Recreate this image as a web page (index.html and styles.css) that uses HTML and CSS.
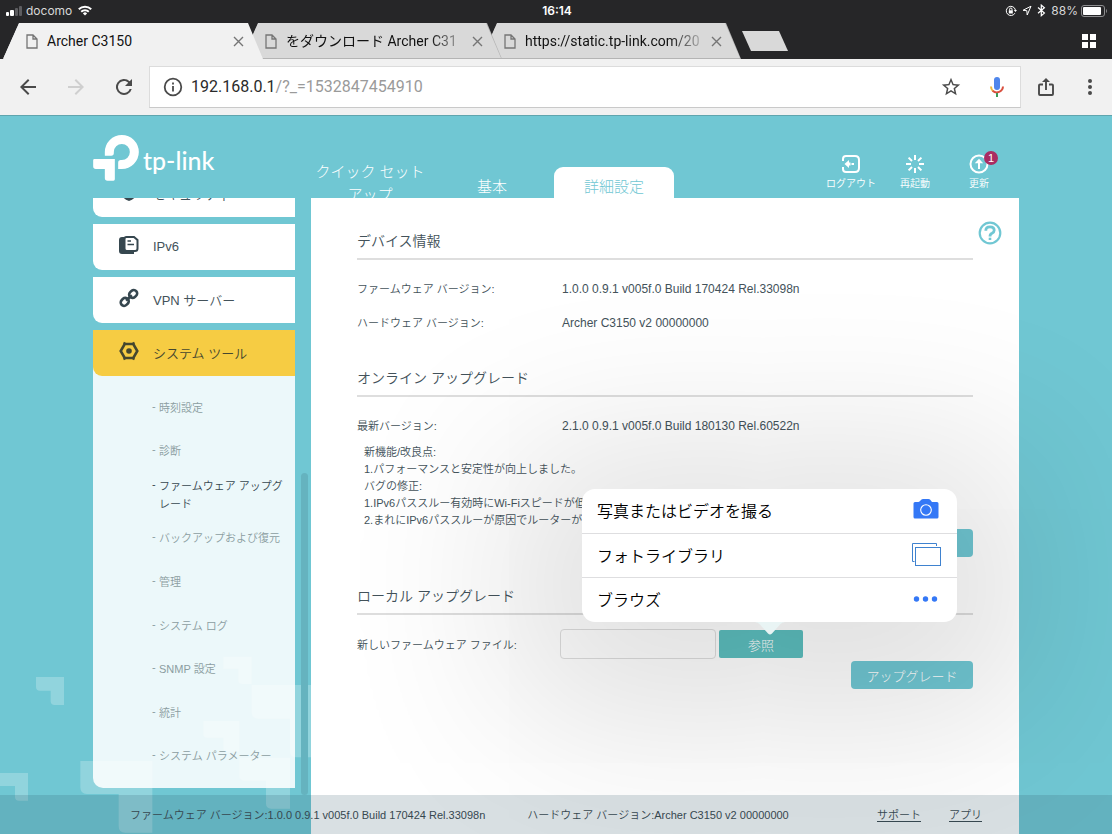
FILE: index.html
```html
<!DOCTYPE html>
<html lang="ja">
<head>
<meta charset="utf-8">
<meta name="viewport" content="width=device-width, initial-scale=1">
<title>Archer C3150</title>
<link rel="stylesheet" href="styles.css">
</head>
<body>
<div class="status">
  <div class="status-side">
    <svg width="18" height="12" viewBox="0 0 18 12" fill="#fff"><rect x="0" y="7" width="3" height="4" rx="1"/><rect x="4" y="5" width="4" height="6" rx="1"/><rect x="9" y="3" width="3" height="8" rx="1" fill="#5d5d60"/><rect x="13" y="1" width="3" height="10" rx="1" fill="#5d5d60"/></svg>
    <span>docomo</span>
    <svg class="wifi" width="14" height="11" viewBox="0 0 14 11" fill="none" stroke="#fff" stroke-width="2"><path d="M.8 4.2a8.8 8.8 0 0 1 12.4 0M3.2 6.7a5.4 5.4 0 0 1 7.6 0"/><path d="M7 10.6 4.9 8.4a3 3 0 0 1 4.2 0Z" fill="#fff" stroke="none"/></svg>
  </div>
  <div class="clock">16:14</div>
  <div class="status-side status-right">
    <svg width="12" height="12" viewBox="0 0 12 12" fill="none" stroke="#fff"><path d="M9.9 8.2A4.6 4.6 0 1 1 10.4 5"/><path d="M8.8 4.9h3.2L10.4 7Z" fill="#fff" stroke="none"/><rect x="3.8" y="5.3" width="4" height="3.2" fill="#fff" stroke="none"/><path d="M4.6 5.5V4.2a1.2 1.2 0 0 1 2.4 0v1.3"/></svg>
    <svg width="10" height="11" viewBox="0 0 10 11" fill="none" stroke="#fff"><path d="M9 1.2 1 5.3l3.8.4L5.2 10Z"/></svg>
    <svg width="9" height="13" viewBox="0 0 9 13" fill="none" stroke="#fff" stroke-width="1.2"><path d="m1 3.5 6.4 5.6-3.1 2.6V1.1l3.1 2.6L1 9.3"/></svg>
    <span>88%</span>
    <svg class="battery" width="27" height="12" viewBox="0 0 27 12" fill="none"><rect x=".5" y=".5" width="23" height="11" rx="2.5" stroke="#8e8e90"/><rect x="2" y="2" width="18" height="8" rx="1" fill="#fff"/><path d="M25 4v4c1.3-.6 1.3-3.4 0-4Z" fill="#8e8e90"/></svg>
  </div>
</div>

<div class="tabstrip">
  <div class="tab tab-active">
    <svg class="doc" width="12" height="15" viewBox="0 0 12 15" fill="none" stroke="#757575" stroke-width="1.3"><path d="M1 1h6l4 4v9H1ZM7 1v4h4"/></svg>
    <span class="tab-title">Archer C3150</span>
    <button class="close" aria-label="閉じる"><svg width="11" height="11" viewBox="0 0 11 11" stroke="#757575" stroke-width="1.4"><path d="m1 1 9 9M10 1l-9 9"/></svg></button>
  </div>
  <div class="tab tab-second">
    <svg class="doc" width="12" height="15" viewBox="0 0 12 15" fill="none" stroke="#757575" stroke-width="1.3"><path d="M1 1h6l4 4v9H1ZM7 1v4h4"/></svg>
    <span class="tab-title fade">をダウンロード Archer C31</span>
    <button class="close" aria-label="閉じる"><svg width="11" height="11" viewBox="0 0 11 11" stroke="#757575" stroke-width="1.4"><path d="m1 1 9 9M10 1l-9 9"/></svg></button>
  </div>
  <div class="tab">
    <svg class="doc" width="12" height="15" viewBox="0 0 12 15" fill="none" stroke="#757575" stroke-width="1.3"><path d="M1 1h6l4 4v9H1ZM7 1v4h4"/></svg>
    <span class="tab-title fade">https://static.tp-link.com/20</span>
    <button class="close" aria-label="閉じる"><svg width="11" height="11" viewBox="0 0 11 11" stroke="#757575" stroke-width="1.4"><path d="m1 1 9 9M10 1l-9 9"/></svg></button>
  </div>
  <button class="newtab" aria-label="新しいタブ"></button>
  <button class="grid-btn" aria-label="タブ一覧"><svg width="14" height="14" viewBox="0 0 14 14" fill="#fff"><path d="M0 0h6v6H0zM8 0h6v6H8zM0 8h6v6H0zM8 8h6v6H8z"/></svg></button>
</div>

<div class="toolbar">
  <button aria-label="戻る"><svg width="24" height="24" viewBox="0 0 24 24" fill="#4a4a4a"><path d="M20 11H7.8l5.6-5.6L12 4l-8 8 8 8 1.4-1.4L7.8 13H20z"/></svg></button>
  <button aria-label="進む"><svg width="24" height="24" viewBox="0 0 24 24" fill="#cfcfcf"><path d="m12 4-1.4 1.4 5.6 5.6H4v2h12.200l-5.600 5.600L12 20l8-8z"/></svg></button>
  <button aria-label="再読み込み"><svg width="24" height="24" viewBox="0 0 24 24" fill="#4a4a4a"><path d="M17.650 6.350A8 8 0 1 0 19.730 14h-2.080A6 6 0 1 1 12 6c1.660 0 3.140.690 4.220 1.780L13 11h7V4z"/></svg></button>
  <div class="urlbox">
    <svg width="20" height="20" viewBox="0 0 20 20" fill="none" stroke="#4a4a4a" stroke-width="1.8"><circle cx="10" cy="10" r="8.300"/><path d="M10 9v5.500M10 5.500v2"/></svg>
    <span class="url">192.168.0.1<span class="path">/?_=1532847454910</span></span>
    <button aria-label="ブックマーク"><svg width="22" height="22" viewBox="0 0 24 24" fill="#4a4a4a"><path d="m22 9.240-7.190-.620L12 2 9.190 8.630 2 9.240l5.460 4.730L5.820 21 12 17.270 18.180 21l-1.630-7.030zM12 15.400l-3.760 2.270 1-4.280-3.320-2.880 4.380-.380L12 6.100l1.710 4.040 4.380.380-3.320 2.880 1 4.280z"/></svg></button>
    <button aria-label="音声検索"><svg width="16" height="22" viewBox="0 0 16 22" fill="none" stroke-width="2"><rect x="5" y="1" width="6" height="13" rx="3" fill="#4f86ec"/><path d="M2 10.500c0 2 .8 3.500 1.900 4.500" stroke="#eeb83c"/><path d="M3.600 14.700A6.200 6.200 0 0 0 14 10.500" stroke="#d9503f"/><path d="M8 17v4" stroke="#3a9a58"/></svg></button>
  </div>
  <button aria-label="共有"><svg width="18" height="20" viewBox="0 0 18 20" fill="none" stroke="#4a4a4a" stroke-width="1.900"><path d="M6 7.500H3q-1 0-1 1V17q0 1 1 1h12q1 0 1-1V8.500q0-1-1-1h-3M9 13V3"/><path d="M5 5 9 1l4 4Z" fill="#4a4a4a" stroke="none"/></svg></button>
  <button aria-label="メニュー"><svg width="24" height="24" viewBox="0 0 24 24" fill="#4a4a4a"><circle cx="12" cy="6" r="2"/><circle cx="12" cy="12" r="2"/><circle cx="12" cy="18" r="2"/></svg></button>
</div>

<div class="page">
  <svg class="decor" width="330" height="194" viewBox="0 0 990 582" fill="#fff"><path d="M108 111h84v84h-28q-12 0-12-12v-31h-32q-12 0-12-12ZM0 399h84v83H57q-12 0-12-12v-32H0ZM241 363h216v215h-81q-20 0-20-20v-96h-95q-20 0-20-20ZM670 50h85v82h-28q-12 0-12-12V86h-45ZM755 135h235v217H890q-20 0-20-20v-96h-95q-20 0-20-20ZM610 243h108v110h152v153h-56q-16 0-16-16v-68h-64q-16 0-16-16v-71h-36q-12 0-12-12v-30h-48q-12 0-12-12Z"/></svg>

  <div class="frame">
    <header class="header">
      <a class="logo" href="#">
        <svg width="46" height="46" viewBox="37 60 137 138" fill="#fff"><path d="M72 122V111A51 51 0 1 1 123 162H112V143q0-8 8-8h3A24 24 0 1 0 99 111v3q0 8-8 8ZM41 132h61v61q0 4-4 4H80q-8 0-8-8v-27H45q-8 0-8-8v-18q0-4 4-4Z"/></svg>
        <span>tp-link</span>
      </a>
      <nav class="topnav">
        <a class="wrap" href="#">クイック セットアップ</a>
        <a href="#">基本</a>
        <a class="current" href="#">詳細設定</a>
      </nav>
      <div class="actions">
        <button><svg width="20" height="20" viewBox="0 0 20 20" fill="none" stroke="#fff" stroke-width="2"><path d="M2 7V5q0-3 3-3h9q4 0 4 4v8q0 4-4 4H5q-3 0-3-3v-2"/><path d="M3.500 10 8 6v2.500h1.500v3H8V14Z" fill="#fff" stroke="none"/><path d="M10.500 10H13"/></svg>ログアウト</button>
        <button><svg width="20" height="20" viewBox="0 0 20 20" stroke="#fff" stroke-width="2"><path d="M10 1v5M10 14v5M1 10h5M14 10h5M3.600 3.600 7 7M13 13l3.400 3.400M16.400 3.600 13 7M7 13l-3.400 3.400"/></svg>再起動</button>
        <button class="update"><svg width="20" height="20" viewBox="0 0 20 20" fill="none" stroke="#fff" stroke-width="2"><circle cx="10" cy="10" r="8.500"/><path d="M10 8v7"/><path d="m5.800 9.300 4.200-4.500 4.200 4.500Z" fill="#fff" stroke="none"/></svg>更新<span class="badge">1</span></button>
      </div>
    </header>

    <div class="main">
      <nav class="sidebar">
        <a class="item cut" href="#"><svg width="20" height="20" viewBox="0 0 20 20" fill="#36474f"><path d="m10 1 8 3v6q0 6-8 9-8-3-8-9V4Z"/></svg>セキュリティ</a>
        <a class="item" href="#"><svg width="20" height="20" viewBox="0 0 20 20" fill="none" stroke="#36474f" stroke-width="2"><path d="M5 2H3Q0 2 0 5v11q0 3 3 3h12v-3H8q-3 0-3-3Z" fill="#36474f" stroke="none"/><path d="M7.500 2H15l3.500 3v8.500q0 2.500-2.500 2.500H8q-2.500 0-2.500-2.500V4q0-2 2-2Z"/><path d="M8.500 6H12M8.500 9.500H15" stroke-width="1.500"/></svg>IPv6</a>
        <a class="item" href="#"><svg width="20" height="20" viewBox="0 0 20 20" fill="none" stroke="#36474f" stroke-width="2.600"><g transform="rotate(-43 10 10)"><rect x="0" y="6.500" width="8.500" height="6.800" rx="3.400"/><rect x="11.500" y="6.500" width="8.500" height="6.800" rx="3.400"/><path d="M6 9.900h8"/></g></svg>VPN サーバー</a>
        <a class="item on" href="#"><svg width="20" height="20" viewBox="0 0 20 20" fill="none" stroke="#45472f" stroke-width="2.600"><path d="M5.700 3h8.600l4 7-4 7H5.700l-4-7Z"/><circle cx="10" cy="10" r="2.800" fill="#45472f" stroke="none"/><path d="M4.500 1.600 7 3M15.500 1.600 13 3M4.500 18.400 7 17M15.500 18.400 13 17" stroke-width="2"/></svg>システム ツール</a>
        <ul class="submenu">
          <li><a href="#">時刻設定</a></li>
          <li><a href="#">診断</a></li>
          <li class="here"><a href="#">ファームウェア アップグレード</a></li>
          <li><a href="#">バックアップおよび復元</a></li>
          <li><a href="#">管理</a></li>
          <li><a href="#">システム ログ</a></li>
          <li><a href="#">SNMP 設定</a></li>
          <li><a href="#">統計</a></li>
          <li><a href="#">システム パラメーター</a></li>
        </ul>
      </nav>
      <div class="gutter"><div class="thumb"></div></div>

      <main class="content">
        <div class="sections">
          <section>
            <h2>デバイス情報</h2>
            <dl>
              <dt>ファームウェア バージョン:</dt><dd>1.0.0 0.9.1 v005f.0 Build 170424 Rel.33098n</dd>
              <dt>ハードウェア バージョン:</dt><dd>Archer C3150 v2 00000000</dd>
            </dl>
          </section>
          <section class="online">
            <h2>オンライン アップグレード</h2>
            <dl>
              <dt>最新バージョン:</dt><dd>2.1.0 0.9.1 v005f.0 Build 180130 Rel.60522n</dd>
            </dl>
            <div class="notes">
              <p>新機能/改良点:</p>
              <p>1.パフォーマンスと安定性が向上しました。</p>
              <p>バグの修正:</p>
              <p>1.IPv6パススルー有効時にWi-Fiスピードが低</p>
              <p>2.まれにIPv6パススルーが原因でルーターが</p>
            </div>
            <button class="btn" aria-label="アップグレード"></button>
          </section>
          <section>
            <h2>ローカル アップグレード</h2>
            <div class="filerow">
              <label for="fw">新しいファームウェア ファイル:</label>
              <input id="fw" type="text" readonly>
              <div class="browse-wrap">
                <button class="browse">参照</button>
                <div class="popover">
                  <button>写真またはビデオを撮る<svg width="30" height="24" viewBox="0 0 30 24"><path d="M4 4h3.500l1-.500L10.500 1.500Q11 1 12 1h5.500q1 0 1.500.5l2 2.500H26q1.500 0 1.500 1.500V19q0 1.500-1.500 1.500H4Q2.500 20.500 2.500 19V5.500Q2.500 4 4 4Z" fill="#3478f6"/><circle cx="15" cy="12" r="5.300" fill="none" stroke="#fff" stroke-width="1.100"/></svg></button>
                  <button>フォトライブラリ<svg width="30" height="24" viewBox="0 0 30 24" fill="none" stroke="#3f82cf"><path d="M3.500 18.500h-2v-18h24v2.500"/><rect x="4.500" y="4.500" width="25" height="18"/></svg></button>
                  <button>ブラウズ<svg width="30" height="24" viewBox="0 0 30 24" fill="#3478f6"><circle cx="5.500" cy="12" r="2.700"/><circle cx="14.500" cy="12" r="2.700"/><circle cx="23.500" cy="12" r="2.700"/></svg></button>
                  <svg class="arrow" width="30" height="13" viewBox="0 0 30 13"><path d="M0 0h30q-3 0-5 2.500l-8 9q-2 2-4 0l-8-9Q3 0 0 0Z" fill="#e9f4f4"/></svg>
                </div>
              </div>
            </div>
            <button class="btn">アップグレード</button>
          </section>
        </div>
        <button class="help" aria-label="ヘルプ"><svg width="24" height="24" viewBox="0 0 24 24" fill="none" stroke="#70c7d3" stroke-width="2.200"><circle cx="12" cy="12" r="10.300"/><path d="M7.800 9.800q0-4 4.200-4t4.200 3.500q0 1.800-2.200 2.900-2 .9-2 3.300" stroke-width="2.800"/><path d="M12 16.700v2.300" stroke-width="2.600"/></svg></button>
      </main>
    </div>
  </div>

  <footer class="footer">
    <div class="footer-in">
      <span>ファームウェア バージョン:1.0.0 0.9.1 v005f.0 Build 170424 Rel.33098n</span>
      <span>ハードウェア バージョン:Archer C3150 v2 00000000</span>
      <span class="links"><a href="#">サポート</a><a href="#">アプリ</a></span>
    </div>
  </footer>
</div>
</body>
</html>
```
FILE: styles.css
```css
* { box-sizing: border-box; margin: 0; padding: 0; }

body {
  display: flex;
  flex-direction: column;
  height: 100vh;
  overflow: hidden;
  background: #262628;
  font-family: "Liberation Sans", "Noto Sans CJK JP", sans-serif;
  font-size: 11px;
  font-weight: 350;
  color: #43525a;
}

button { border: 0; background: none; font: inherit; color: inherit; cursor: pointer; }
a { color: inherit; text-decoration: none; }
svg { display: block; flex: none; }

/* Device status bar */
.status {
  display: grid;
  grid-template-columns: 1fr auto 1fr;
  align-items: center;
  height: 23px;
  padding: 0 4px 2px 6px;
  color: #fff;
  font: 12px/20px Inter, sans-serif;
}
.status-side { display: flex; align-items: center; color: #d8d8d8; gap: 2px; }
.status-side .wifi { margin-left: 4px; }
.status-right { justify-content: flex-end; gap: 5px; }
.status-right .battery { margin-left: -2px; }
.clock { font-weight: 600; }

/* Browser tabs */
.tabstrip { display: flex; height: 36px; padding-left: 3px; font: 14px/20px Roboto, "Noto Sans CJK JP", sans-serif; color: #111; }
.tab {
  position: relative;
  display: flex;
  align-items: center;
  flex: 0 1 260px;
  min-width: 0;
  padding: 0 18px 0 23px;
  margin-right: -21px;
  background: #b4b4b4;
  clip-path: polygon(0 100%, 16px 0, calc(100% - 15px) 0, 100% 100%);
  isolation: isolate;
}
.tab::before {
  content: "";
  position: absolute;
  inset: 0 1px 1px 0;
  z-index: -1;
  background: #d9d9d9;
  clip-path: polygon(0 100%, 16px 0, calc(100% - 15px) 0, 100% 100%);
}
.tab-second { z-index: 2; }
.tab-active { z-index: 3; background: #f1f1f1; }
.tab-active::before { background: #f1f1f1; }
.doc { margin-right: 9px; }
.tab-title { flex: 1; white-space: nowrap; }
.fade { -webkit-mask-image: linear-gradient(to right, #000 calc(100% - 32px), rgba(0, 0, 0, .2)); mask-image: linear-gradient(to right, #000 calc(100% - 32px), rgba(0, 0, 0, .2)); }
.close { margin-left: 8px; width: 14px; display: flex; justify-content: center; }
.newtab { align-self: center; width: 46px; height: 20px; margin-left: 22px; background: #d9d9d9; clip-path: polygon(0 0, 37px 0, 100% 100%, 9px 100%); }
.grid-btn { margin-left: auto; padding: 0 16px; }

/* Address bar */
.toolbar { display: flex; align-items: center; height: 56px; padding: 0 10px 0 16px; background: #f1f1f1; font: 16px/24px Roboto, sans-serif; }
.toolbar > button { display: flex; justify-content: center; width: 24px; margin-right: 24px; }
.toolbar > button:last-child { margin-right: 0; }
.toolbar .urlbox + button { margin-right: 20px; }
.urlbox {
  display: flex;
  align-items: center;
  flex: 1;
  height: 42px;
  margin: 0 13px 0 -11px;
  padding: 0 15px 0 13px;
  background: #fff;
  border: 1px solid #dcdcdc;
  border-bottom-color: #c9c9c9;
}
.url { flex: 1; margin-left: 8px; color: #2a2a2a; }
.path { color: #9a9a9a; }
.urlbox button { margin-left: 27px; }

/* Router page */
.page { position: relative; flex: 1; min-height: 0; display: flex; background: #70c7d3; border-top: 1px solid #5fa5ae; overflow: hidden; }
.decor { position: absolute; left: 0; bottom: 0; opacity: .23; }
.frame { position: relative; display: flex; flex-direction: column; width: 100%; max-width: 926px; margin: 0 auto; }

.header { display: flex; height: 82px; color: #fff; }
.logo { display: flex; width: 217px; padding-top: 19px; gap: 4px; font: 500 25px/50px Lato, sans-serif; }
.topnav { display: flex; flex: 1; align-items: flex-end; gap: 2px; font-size: 15px; font-weight: 300; text-align: center; }
.topnav a { width: 120px; height: 31px; line-height: 39px; border-radius: 9px 9px 0 0; }
.topnav .wrap { height: 38px; line-height: 23px; }
.topnav .current { background: #fff; color: #70c7d3; }
.actions { display: flex; align-items: flex-start; padding: 38px 8px 0 0; font-size: 10px; line-height: 20px; }
.actions button { position: relative; display: flex; flex-direction: column; align-items: center; width: 64px; }
.badge { position: absolute; top: -3px; left: 37px; width: 14px; height: 14px; border-radius: 50%; background: #a92c63; font-size: 11px; line-height: 14px; }

.main { position: relative; display: flex; flex: 1; min-height: 0; }
.sidebar { display: flex; flex-direction: column; width: 202px; margin-bottom: 46px; overflow: hidden; }
.item { display: flex; flex: none; align-items: center; gap: 14px; height: 46px; margin-bottom: 7px; padding: 0 0 1px 26px; background: #fff; border-bottom-left-radius: 9px; font-size: 13px; }
.item svg { margin-bottom: 4px; }
.cut { margin-top: -27px; }
.on { position: relative; z-index: 1; margin-bottom: 0; background: #f6cc43; color: #45472f; }
.submenu { display: flex; flex: 1; flex-direction: column; margin-top: -9px; padding: 19px 0 10px; list-style: none; background: rgba(255, 255, 255, .87); border-bottom-left-radius: 10px; color: #8b9da1; line-height: 18px; }
.submenu li { display: flex; flex: 1; align-items: center; padding: 0 8px 0 59px; }
.submenu a { display: flex; }
.submenu a::before { content: "-"; flex: none; width: 7px; line-height: 14px; }
.submenu .here { color: #36474f; }
.gutter { display: flex; width: 16px; padding-bottom: 39px; justify-content: center; align-items: flex-end; }
.thumb { width: 7px; height: 54%; border-radius: 4px; background: #65b3bf; margin-left: 3px; }

.content { display: flex; flex: 1; min-width: 0; background: #fff; padding-left: 46px; }
.sections { flex: 1; min-width: 0; padding-top: 32px; }
.help { align-self: flex-start; width: 46px; padding: 23px 0 0 5px; }
section { margin-bottom: 34px; }
h2 { font-size: 14px; line-height: 22px; font-weight: 350; padding-bottom: 6px; border-bottom: 2px solid #dedede; }
dl { display: grid; grid-template-columns: 205px 1fr; row-gap: 14px; padding-top: 19px; line-height: 20px; }
dd { font-size: 12px; }
.notes { padding: 8px 0 0 7px; line-height: 17px; white-space: nowrap; }
.btn { display: block; margin-left: auto; width: 122px; height: 28px; border-radius: 4px; background: #70c7d3; color: #fff; font-size: 13px; font-weight: 300; line-height: 32px; }
.online { margin-bottom: 28px; }
.filerow { display: flex; align-items: center; padding: 14px 0 2px; }
.filerow label { width: 203px; }
.filerow input { width: 156px; height: 30px; border: 1px solid #dedede; border-radius: 4px; background: transparent; }
.browse-wrap { position: relative; margin-left: 3px; }
.browse { display: block; width: 84px; height: 28px; border-radius: 2px; background: #5dbfbf; color: #fff; font-size: 13px; font-weight: 300; line-height: 32px; }

.popover {
  position: absolute;
  z-index: 5;
  left: -137px;
  bottom: calc(100% + 8px);
  width: 375px;
  background: #fff;
  border-radius: 13px;
  box-shadow: 0 30px 170px 75px rgba(0, 0, 0, .12);
  color: #000;
}
.popover button { display: flex; align-items: center; justify-content: space-between; width: 100%; height: 44px; padding: 0 16px 2px 15px; font-size: 16px; }
.popover button + button { border-top: 1px solid #dedee0; }
.popover button:last-of-type { height: 45px; }
.arrow { position: absolute; top: 100%; left: 173px; }

.footer { position: absolute; z-index: 10; left: 0; right: 0; bottom: 0; padding-top: 1px; background: rgba(44, 83, 99, .18); line-height: 38px; }
.footer-in { display: flex; max-width: 926px; margin: 0 auto; padding: 0 37px; gap: 42px; white-space: nowrap; color: #36474f; }
.links { display: flex; gap: 28px; margin-left: auto; }
.links a { text-decoration: underline; text-underline-offset: 2px; }
```
